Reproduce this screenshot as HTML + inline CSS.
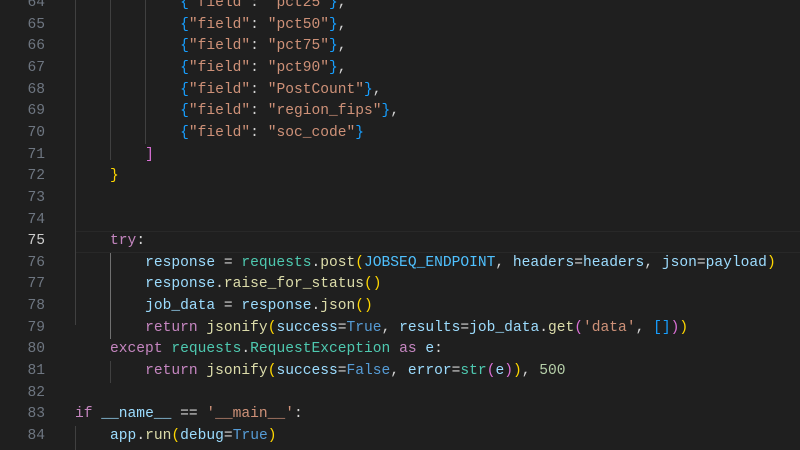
<!DOCTYPE html>
<html><head><style>
body{margin:0;width:800px;height:450px;background:#1f1f1f;overflow:hidden;position:relative;font-family:"Liberation Mono",monospace;font-size:14.6px}
.l{position:absolute;left:0;height:21.65px;line-height:21.65px;width:800px;white-space:pre}
.n{position:absolute;left:0;width:45px;text-align:right;color:#6e7681}
.c{position:absolute;left:75px;color:#d4d4d4}
.g{position:absolute;width:1px;background:#404040}
.k{color:#c586c0}.v{color:#9cdcfe}.t{color:#4ec9b0}.f{color:#dcdcaa}.s{color:#ce9178}.b{color:#569cd6}.C{color:#4fc1ff}.num{color:#b5cea8}
.y{color:#ffd700}.p{color:#da70d6}.bl{color:#179fff}
</style></head><body>
<div style="position:absolute;left:75px;top:231px;width:725px;height:20px;border-top:1px solid #282828;border-bottom:1px solid #282828"></div>
<div class="g" style="left:75px;top:0;height:325px"></div>
<div class="g" style="left:75px;top:338px;height:2px;display:none"></div>
<div class="g" style="left:110px;top:0;height:160px"></div>
<div class="g" style="left:145px;top:0;height:144px"></div>
<div class="g" style="left:110px;top:253px;height:86px;background:#707070"></div>
<div class="g" style="left:110px;top:361px;height:22px"></div>
<div class="g" style="left:75px;top:426px;height:24px"></div>

<div class="l" style="top:-7px"><span class="n">64</span><span class="c">            <span class="bl">{</span><span class="s">"field"</span>: <span class="s">"pct25"</span><span class="bl">}</span>,</span></div>
<div class="l" style="top:14.65px"><span class="n">65</span><span class="c">            <span class="bl">{</span><span class="s">"field"</span>: <span class="s">"pct50"</span><span class="bl">}</span>,</span></div>
<div class="l" style="top:36.3px"><span class="n">66</span><span class="c">            <span class="bl">{</span><span class="s">"field"</span>: <span class="s">"pct75"</span><span class="bl">}</span>,</span></div>
<div class="l" style="top:57.95px"><span class="n">67</span><span class="c">            <span class="bl">{</span><span class="s">"field"</span>: <span class="s">"pct90"</span><span class="bl">}</span>,</span></div>
<div class="l" style="top:79.6px"><span class="n">68</span><span class="c">            <span class="bl">{</span><span class="s">"field"</span>: <span class="s">"PostCount"</span><span class="bl">}</span>,</span></div>
<div class="l" style="top:101.25px"><span class="n">69</span><span class="c">            <span class="bl">{</span><span class="s">"field"</span>: <span class="s">"region_fips"</span><span class="bl">}</span>,</span></div>
<div class="l" style="top:122.9px"><span class="n">70</span><span class="c">            <span class="bl">{</span><span class="s">"field"</span>: <span class="s">"soc_code"</span><span class="bl">}</span></span></div>
<div class="l" style="top:144.55px"><span class="n">71</span><span class="c">        <span class="p">]</span></span></div>
<div class="l" style="top:166.2px"><span class="n">72</span><span class="c">    <span class="y">}</span></span></div>
<div class="l" style="top:187.85px"><span class="n">73</span></div>
<div class="l" style="top:209.5px"><span class="n">74</span></div>
<div class="l" style="top:231.15px"><span class="n" style="color:#cccccc">75</span><span class="c">    <span class="k">try</span>:</span></div>
<div class="l" style="top:252.8px"><span class="n">76</span><span class="c">        <span class="v">response</span> = <span class="t">requests</span>.<span class="f">post</span><span class="y">(</span><span class="C">JOBSEQ_ENDPOINT</span>, <span class="v">headers</span>=<span class="v">headers</span>, <span class="v">json</span>=<span class="v">payload</span><span class="y">)</span></span></div>
<div class="l" style="top:274.45px"><span class="n">77</span><span class="c">        <span class="v">response</span>.<span class="f">raise_for_status</span><span class="y">()</span></span></div>
<div class="l" style="top:296.1px"><span class="n">78</span><span class="c">        <span class="v">job_data</span> = <span class="v">response</span>.<span class="f">json</span><span class="y">()</span></span></div>
<div class="l" style="top:317.75px"><span class="n">79</span><span class="c">        <span class="k">return</span> <span class="f">jsonify</span><span class="y">(</span><span class="v">success</span>=<span class="b">True</span>, <span class="v">results</span>=<span class="v">job_data</span>.<span class="f">get</span><span class="p">(</span><span class="s">'data'</span>, <span class="bl">[]</span><span class="p">)</span><span class="y">)</span></span></div>
<div class="l" style="top:339.4px"><span class="n">80</span><span class="c">    <span class="k">except</span> <span class="t">requests</span>.<span class="t">RequestException</span> <span class="k">as</span> <span class="v">e</span>:</span></div>
<div class="l" style="top:361.05px"><span class="n">81</span><span class="c">        <span class="k">return</span> <span class="f">jsonify</span><span class="y">(</span><span class="v">success</span>=<span class="b">False</span>, <span class="v">error</span>=<span class="t">str</span><span class="p">(</span><span class="v">e</span><span class="p">)</span><span class="y">)</span>, <span class="num">500</span></span></div>
<div class="l" style="top:382.7px"><span class="n">82</span></div>
<div class="l" style="top:404.35px"><span class="n">83</span><span class="c"><span class="k">if</span> <span class="v">__name__</span> == <span class="s">'__main__'</span>:</span></div>
<div class="l" style="top:426px"><span class="n">84</span><span class="c">    <span class="v">app</span>.<span class="f">run</span><span class="y">(</span><span class="v">debug</span>=<span class="b">True</span><span class="y">)</span></span></div>
</body></html>
